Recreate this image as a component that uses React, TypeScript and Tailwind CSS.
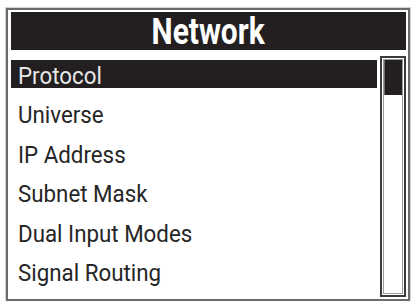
const items = ["Protocol", "Universe", "IP Address", "Subnet Mask", "Dual Input Modes", "Signal Routing"];

export default function App() {
  const selected = 0;
  return (
    <div className="w-[412px] h-[301px] bg-white overflow-hidden">
      <div className="ml-[6px] mt-[8px] w-[404px] h-[293px] border-2 border-[#6b6b6b] pl-[3px] pr-[2px] pt-[2px] shadow-[0_0_0_1px_#d4d4d4]">
        {/* Title bar */}
        <div className="h-[38px] bg-[#231f20] flex items-center justify-center">
          <span className="inline-block scale-x-[0.83] text-white text-[36px] font-bold leading-none pt-[1px] font-['Roboto',sans-serif]">
            Network
          </span>
        </div>

        <div className="flex gap-[3px] mt-[6px]">
          {/* Menu list */}
          <div className="w-[366px] pt-[4px] flex flex-col gap-[11.4px]">
            {items.map((label, i) => (
              <div
                key={label}
                className={`h-[28px] pl-[7px] text-[24px] leading-[33px] whitespace-nowrap font-['Roboto',sans-serif] ${
                  i === selected ? "bg-[#231f20] text-[#e6e6e6]" : "text-[#262626]"
                }`}
              >
                <span className="inline-block origin-left scale-x-[0.93]">{label}</span>
              </div>
            ))}
          </div>

          {/* Scrollbar */}
          <div className="w-[26px] h-[241px] border-2 border-[#3a3a3a] p-[1px]">
            <div className="h-full border border-[#9a9a9a] bg-white">
              <div className="h-[35px] bg-[#231f20] border-l border-[#6b6b6b]" />
            </div>
          </div>
        </div>
      </div>
    </div>
  );
}
